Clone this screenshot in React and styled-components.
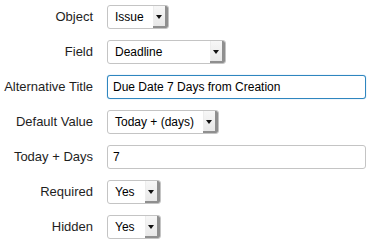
import React from "react";
import styled, { createGlobalStyle } from "styled-components";

const Global = createGlobalStyle`
  html, body { margin: 0; padding: 0; background: #fff; }
  body { font-family: "Liberation Sans", Arial, sans-serif; font-size: 13px; color: #222; }
`;

const Form = styled.div`
  display: grid;
  grid-template-columns: 93px auto;
  column-gap: 14px;
  row-gap: 11px;
  padding-top: 5px;
  align-items: center;
`;

const Label = styled.label`
  text-align: right;
  white-space: nowrap;
  font-size: 13px;
  color: #1e1e1e;
  line-height: 24px;
`;

const SelectBox = styled.div`
  box-sizing: border-box;
  width: ${(p) => p.$w}px;
  height: 24px;
  border: 1px solid #c4c4c4;
  border-radius: 3px;
  background: #fff;
  display: flex;
  align-items: stretch;
  overflow: hidden;
  color: #000;
`;

const SelectText = styled.span`
  flex: 1;
  padding-left: 7px;
  line-height: 22px;
  font-size: 12px;
  white-space: nowrap;
`;

const ArrowBox = styled.span`
  width: 12px;
  background: linear-gradient(#f7f7f7, #e6e6e6);
  box-shadow: inset -3px -2px 0 #8f8f8f, inset 1px 0 0 #ededed;
  display: flex;
  align-items: center;
  justify-content: center;
  padding-right: 3px;
  padding-bottom: 1px;
  &::after {
    content: "";
    width: 0;
    height: 0;
    border-left: 3px solid transparent;
    border-right: 3px solid transparent;
    border-top: 4px solid #111;
  }
`;

const TextInput = styled.div`
  box-sizing: border-box;
  width: 259px;
  height: 24px;
  border: 1px solid ${(p) => (p.$focus ? "#2f86bf" : "#c4c4c4")};
  box-shadow: ${(p) => (p.$focus ? "0 0 1px #6fb0da" : "none")};
  border-radius: 3px;
  background: #fff;
  padding-left: 5px;
  line-height: 22px;
  font-size: 12px;
  color: #000;
  white-space: nowrap;
`;

const Select = ({ w, children }) => (
  <SelectBox $w={w}>
    <SelectText>{children}</SelectText>
    <ArrowBox />
  </SelectBox>
);

export default function App() {
  return (
    <>
      <Global />
      <Form>
        <Label>Object</Label>
        <Select w={62}>Issue</Select>
        <Label>Field</Label>
        <Select w={119}>Deadline</Select>
        <Label>Alternative Title</Label>
        <TextInput $focus>Due Date 7 Days from Creation</TextInput>
        <Label>Default Value</Label>
        <Select w={112}>Today + (days)</Select>
        <Label>Today + Days</Label>
        <TextInput>7</TextInput>
        <Label>Required</Label>
        <Select w={54}>Yes</Select>
        <Label>Hidden</Label>
        <Select w={54}>Yes</Select>
      </Form>
    </>
  );
}
